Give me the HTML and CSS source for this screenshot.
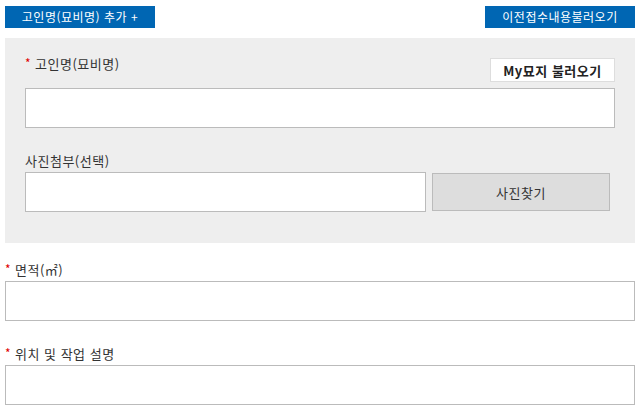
FILE: index.html
```html
<!DOCTYPE html>
<html lang="ko">
<head>
<meta charset="utf-8">
<link rel="stylesheet" href="styles.css">
</head>
<body>
<div class="page">
  <div class="topbar">
    <button class="btn-blue btn-add">고인명(묘비명) 추가 +</button>
    <button class="btn-blue btn-prev">이전접수내용불러오기</button>
  </div>
  <div class="panel">
    <div class="row-head">
      <label class="label"><span class="req">*</span>고인명(묘비명)</label>
      <button class="btn-my">My묘지 불러오기</button>
    </div>
    <input class="field" type="text">
    <label class="label label-photo">사진첨부(선택)</label>
    <div class="photo-row">
      <input class="field field-photo" type="text">
      <button class="btn-find">사진찾기</button>
    </div>
  </div>
  <label class="label label-area"><span class="req">*</span>면적(㎡)</label>
  <input class="field" type="text">
  <label class="label label-desc"><span class="req">*</span>위치 및 작업 설명</label>
  <input class="field" type="text">
</div>
</body>
</html>
```
FILE: styles.css
```css
html, body {
  margin: 0;
  padding: 0;
  background: #fff;
}
body {
  font-family: "Noto Sans CJK KR", "Noto Sans", sans-serif;
  font-size: 13px;
  color: #333;
}
.page {
  padding: 6px 5px 0 5px;
}
.topbar {
  display: flex;
  justify-content: space-between;
  height: 22px;
}
.btn-blue {
  width: 150px;
  height: 22px;
  border: 0;
  margin: 0;
  padding: 0;
  background: #0066b3;
  color: #fff;
  font-family: inherit;
  font-size: 12px;
  letter-spacing: 0.5px;
  line-height: 22px;
}
.panel {
  margin-top: 10px;
  background: #eeeeee;
  padding: 20px 20px 31px 20px;
}
.row-head {
  display: flex;
  justify-content: space-between;
  align-items: flex-start;
  height: 24px;
  margin-bottom: 6px;
}
.label {
  display: block;
  line-height: 20px;
  height: 20px;
  color: #333;
  letter-spacing: 0.5px;
}
.row-head .label {
  margin-top: -4px;
}
.req {
  color: #e00000;
  display: inline-block;
  width: 10px;
  font-size: 12px;
  vertical-align: top;
  line-height: 18px;
  letter-spacing: 0;
}
.btn-my {
  width: 125px;
  height: 24px;
  margin: 0;
  padding: 0;
  background: #fff;
  border: 1px solid #dddddd;
  font-family: inherit;
  font-size: 13px;
  font-weight: bold;
  letter-spacing: 0.5px;
  color: #222;
}
.field {
  display: block;
  box-sizing: border-box;
  width: 100%;
  height: 40px;
  margin: 0;
  border: 1px solid #bbbbbb;
  background: #fff;
  padding: 0 8px;
}
.label-photo {
  margin-top: 23px;
  margin-bottom: 1px;
}
.photo-row {
  display: flex;
  align-items: center;
  gap: 6px;
  padding-right: 5px;
}
.field-photo {
  width: 401px;
  flex: none;
}
.btn-find {
  flex: 1;
  height: 38px;
  margin: 0;
  background: #dddddd;
  border: 1px solid #bbbbbb;
  font-family: inherit;
  font-size: 13px;
  letter-spacing: 0.5px;
  color: #333;
}
.label-area {
  margin-top: 17px;
  margin-bottom: 1px;
}
.label-desc {
  margin-top: 23px;
  margin-bottom: 1px;
}
```
